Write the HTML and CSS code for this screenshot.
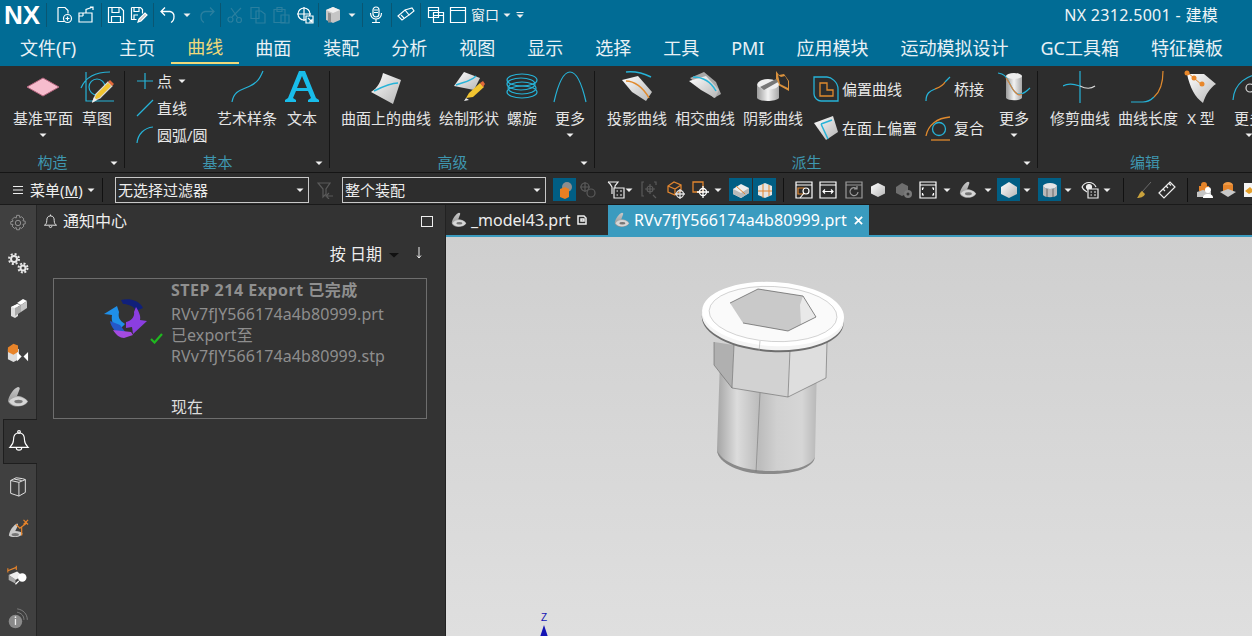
FILE: index.html
```html
<!DOCTYPE html>
<html lang="zh">
<head>
<meta charset="utf-8">
<title>NX 2312.5001 - 建模</title>
<link rel="stylesheet" href="styles.css">
</head>
<body>
<svg class="defs" width="0" height="0" aria-hidden="true">
  <defs>
    <linearGradient id="gs" x1="0" y1="0" x2="1" y2="1"><stop offset="0" stop-color="#fff"/><stop offset="1" stop-color="#b5b5b5"/></linearGradient>
    <linearGradient id="gp" x1="0" y1="0" x2="0" y2="1"><stop offset="0" stop-color="#c9c9c9"/><stop offset="1" stop-color="#8c8c8c"/></linearGradient>
    <linearGradient id="gc" x1="0" y1="0" x2="1" y2="0"><stop offset="0" stop-color="#9a9a9a"/><stop offset=".5" stop-color="#f2f2f2"/><stop offset="1" stop-color="#a8a8a8"/></linearGradient>
    <linearGradient id="mb" x1="0" y1="0" x2="1" y2="0"><stop offset="0" stop-color="#a5a5a5"/><stop offset=".2" stop-color="#dcdcdc"/><stop offset=".42" stop-color="#bcbcbc"/><stop offset=".6" stop-color="#d0d0d0"/><stop offset=".85" stop-color="#d6d6d6"/><stop offset="1" stop-color="#b8b8b8"/></linearGradient>
    <symbol id="caret" viewBox="0 0 8 8"><path d="M0.5 2.5h7L4 6z" fill="#f0f0f0"/></symbol>
    <symbol id="shaded" viewBox="0 0 18 18"><path d="M9 2l7 3.5v7L9 16l-7-3.5v-7z" fill="url(#gs)"/></symbol>
    <symbol id="part" viewBox="0 0 22 22"><path d="M1 15C2 9 7 2 11 1c1.500 0 2 1 1.500 2.500L10 10c4 0 9 2 11 5.500-2 4-7 5-11 5s-8-2-9-5.500z" fill="url(#gp)"/><path d="M2 15.500c2-3 5-4.500 9-4.500s7 1.500 9.500 4.500c-2 3-6 4.500-9.500 4.500s-7-1.500-9-4.500z" fill="#d6d6d6"/><ellipse cx="11.500" cy="15.500" rx="4.200" ry="1.800" fill="#767676"/></symbol>
  </defs>
</svg>

<header class="topbar">
  <div class="quick">
    <span class="logo">NX</span>
    <i class="sep m5"></i>
    <svg class="ic m8" viewBox="0 0 18 18" fill="none" stroke="#fff" stroke-width="1.2"><path d="M3 1.5h7l3 3v3M3 1.500v14h6"/><circle cx="12.500" cy="12.500" r="4"/><path d="M10.500 12.500h4M12.500 10.500v4"/></svg>
    <svg class="ic m4" viewBox="0 0 18 18" fill="none" stroke="#fff" stroke-width="1.2"><path d="M2 7h13v9H2zM2 10h4M6 7v3M9 7V3.500L16 1M13 1h3v3"/></svg>
    <i class="sep m6"></i>
    <svg class="ic m5" viewBox="0 0 18 18" fill="none" stroke="#fff" stroke-width="1.2"><path d="M1.500 1.500h12l3 3v12h-15zM5 1.500v5h7v-5M4.500 16.500v-6h9v6"/></svg>
    <svg class="ic m5" viewBox="0 0 18 18" fill="none" stroke="#fff" stroke-width="1.2"><path d="M1.500 1.500h9l2 2v4M1.500 1.500v12h5M4 1.500v4h5v-4M4 13v-4h4"/><path d="M8 16l1-3 6-6 2 2-6 6z" fill="#c8c8c8"/></svg>
    <i class="sep m5"></i>
    <svg class="ic m5" viewBox="0 0 18 18" fill="none" stroke="#fff" stroke-width="1.300"><path d="M6 1.500L2 5.500l4 4M2 5.500h9a5 5 0 0 1 4 5c0 3-1 5-3 6"/></svg>
    <svg class="car m6"><use href="#caret"/></svg>
    <svg class="ic m7" viewBox="0 0 18 18" fill="none" stroke="#2a7f9f" stroke-width="1.300"><path d="M12 1.500l4 4-4 4M16 5.500H7a5 5 0 0 0-4 5c0 3 1 5 3 6"/></svg>
    <i class="sep m4"></i>
    <svg class="ic m5" viewBox="0 0 18 18" fill="none" stroke="#2a7f9f" stroke-width="1.200"><circle cx="4.500" cy="13.500" r="2.500"/><circle cx="13" cy="14" r="2.500"/><path d="M6 11L15 2M12 12L5 2"/></svg>
    <svg class="ic m5" viewBox="0 0 18 18" fill="none" stroke="#2a7f9f" stroke-width="1.200"><path d="M2 1.500h8v11H2zM7 5h5l4 3v9H7z"/></svg>
    <svg class="ic m5" viewBox="0 0 18 18" fill="none" stroke="#2a7f9f" stroke-width="1.200"><path d="M2 3.500h11v13H2zM5 1.500h5v4H5zM9 9h8v8H9z"/></svg>
    <svg class="ic m6" viewBox="0 0 18 18" fill="none" stroke="#fff" stroke-width="1.200"><circle cx="8" cy="8" r="6"/><path d="M8 1v14M1 8h14"/><path d="M10 10h7v7h-7z" fill="#016c95"/><path d="M12 12l4 4M16 13v3h-3"/></svg>
    <i class="sep m4"></i>
    <svg class="ic m5" viewBox="0 0 18 18"><path d="M2 4l7-3 7 3v10l-7 3-7-3z" fill="#c5c5c5"/><path d="M2 4l7 3 7-3-7-3z" fill="#efefef"/><path d="M7 7.500v9H4v-10z" fill="#8f8f8f"/></svg>
    <svg class="car m6"><use href="#caret"/></svg>
    <i class="sep m6"></i>
    <svg class="ic m4" viewBox="0 0 18 18" fill="none" stroke="#fff" stroke-width="1.200"><rect x="6" y="1" width="6" height="10" rx="3"/><path d="M3.500 7c0 8 11 8 11 0M9 13v3M5 16.500h8M7 4h4M7 6.500h4"/></svg>
    <i class="sep m6"></i>
    <svg class="ic m5" viewBox="0 0 18 18" fill="none" stroke="#fff" stroke-width="1.100"><path d="M1 10l7-6 4 5-7 5z"/><path d="M8 4l7-2 2 3-5 4"/><path d="M4 9l3 3" /></svg>
    <i class="sep m5"></i>
    <svg class="ic m6" viewBox="0 0 18 18" fill="none" stroke="#fff" stroke-width="1.200"><path d="M1.500 1.500h10v10h-10zM1.500 4.500h10M6.500 6.500h10v10h-10zM6.500 9.500h10"/></svg>
    <svg class="ic m4" viewBox="0 0 18 18" fill="none" stroke="#fff" stroke-width="1.200"><path d="M1.500 1.500h15v15h-15zM1.500 4.500h15"/></svg>
    <span class="winlabel m4">窗口</span>
    <svg class="car m4"><use href="#caret"/></svg>
    <svg class="car m5" viewBox="0 0 8 8"><path d="M0.500 1.500h7" stroke="#f0f0f0"/><path d="M0.500 3.500h7L4 7z" fill="#f0f0f0"/></svg>
    <span class="apptitle">NX 2312.5001 - 建模</span>
  </div>
  <nav class="tabs">
    <span class="tab file">文件(F)</span>
    <span class="tab">主页</span>
    <span class="tab active">曲线</span>
    <span class="tab">曲面</span>
    <span class="tab">装配</span>
    <span class="tab">分析</span>
    <span class="tab">视图</span>
    <span class="tab">显示</span>
    <span class="tab">选择</span>
    <span class="tab">工具</span>
    <span class="tab">PMI</span>
    <span class="tab">应用模块</span>
    <span class="tab">运动模拟设计</span>
    <span class="tab">GC工具箱</span>
    <span class="tab">特征模板</span>
  </nav>
</header>

<section class="ribbon">
  <div class="group g1">
    <div class="items">
      <div class="big">
        <svg class="lg" viewBox="0 0 34 34"><path d="M1 17L17 8l16 9-16 9z" fill="#f6bccd" stroke="#b5667f"/></svg>
        <span>基准平面</span>
        <svg class="car"><use href="#caret"/></svg>
      </div>
      <div class="big">
        <svg class="lg" viewBox="0 0 34 34" fill="none" stroke="#26b3d8" stroke-width="1.200"><path d="M1 18C6 6 16 2 30 2M6 2v29h28"/><circle cx="17" cy="17" r="8"/><path d="M13 31l3-7 12-12 4 4-12 12z" fill="#f2c530" stroke="#d8d8d8"/><path d="M28 12l4 4 2-2-4-4z" fill="#e0683a" stroke="none"/><path d="M12 33l2-6 3 3z" fill="#eee" stroke="none"/></svg>
        <span>草图</span>
      </div>
    </div>
    <div class="glabel">构造<svg class="car gcar"><use href="#caret"/></svg></div>
  </div>

  <div class="group g2">
    <div class="items">
      <div class="stack">
        <div class="small"><svg class="sm" viewBox="0 0 18 18" fill="none" stroke="#26b3d8" stroke-width="1.200"><path d="M9 1v16M1 9h16"/></svg><span>点</span><svg class="car m6"><use href="#caret"/></svg></div>
        <div class="small"><svg class="sm" viewBox="0 0 18 18" fill="none" stroke="#26b3d8" stroke-width="1.200"><path d="M1 17L17 1"/></svg><span>直线</span></div>
        <div class="small"><svg class="sm" viewBox="0 0 18 18" fill="none" stroke="#26b3d8" stroke-width="1.200"><path d="M1 17C2 8 8 2 17 1"/></svg><span>圆弧/圆</span></div>
      </div>
      <div class="big">
        <svg class="lg" viewBox="0 0 34 34" fill="none" stroke="#26b3d8" stroke-width="1.200"><path d="M2 32C4 20 12 20 20 16S30 8 33 1"/></svg>
        <span>艺术样条</span>
      </div>
      <div class="big">
        <svg class="lg" viewBox="0 0 34 34" fill="#19bdea"><path d="M14 1h6l11 27 3 2v2H23v-2l3-2-3-7H11l-3 7 3 2v2H0v-2l3-2zM12 18h10L17 6z"/></svg>
        <span>文本</span>
      </div>
    </div>
    <div class="glabel">基本<svg class="car gcar"><use href="#caret"/></svg></div>
  </div>

  <div class="group g3">
    <div class="items">
      <div class="big">
        <svg class="lg" viewBox="0 0 34 34"><path d="M14 3l18 7-8 24L2 22c7-4 10-11 12-19z" fill="url(#gs)"/><path d="M5 21c8-4 16-8 24-8" fill="none" stroke="#26b3d8" stroke-width="1.500"/></svg>
        <span>曲面上的曲线</span>
      </div>
      <div class="big">
        <svg class="lg" viewBox="0 0 34 34"><path d="M12 2l16 6-6 12L2 16z" fill="url(#gs)"/><path d="M4 15c7-3 14-3 20-9" fill="none" stroke="#26b3d8" stroke-width="1.500"/><path d="M14 28l3-5 11-10 4 4-11 10z" fill="#f2c530"/><path d="M28 13l3-2 2 3-2 3z" fill="#e0683a"/><path d="M12 31l2-3 3 2z" fill="#eee"/></svg>
        <span>绘制形状</span>
      </div>
      <div class="big">
        <svg class="lg" viewBox="0 0 34 34" fill="none" stroke="#26b3d8" stroke-width="1.200"><ellipse cx="17" cy="10" rx="15" ry="6"/><ellipse cx="16" cy="14" rx="14" ry="6"/><ellipse cx="17" cy="18" rx="14" ry="6"/><ellipse cx="17" cy="22" rx="15" ry="6"/></svg>
        <span>螺旋</span>
      </div>
      <div class="big more">
        <svg class="lg" viewBox="0 0 34 34" fill="none" stroke="#26b3d8" stroke-width="1.200"><path d="M1 32C6 10 12 2 17 2s11 8 16 30"/></svg>
        <span>更多</span>
        <svg class="car"><use href="#caret"/></svg>
      </div>
    </div>
    <div class="glabel">高级<svg class="car gcar"><use href="#caret"/></svg></div>
  </div>

  <div class="group g4">
    <div class="items">
      <div class="big">
        <svg class="lg" viewBox="0 0 34 34"><path d="M2 10L18 6l14 16-6 9L12 22z" fill="url(#gs)"/><path d="M6 11c8 0 17 6 23 17" fill="none" stroke="#e08a2e" stroke-width="1.500"/><path d="M6 2c10-1 17 1 25 5" fill="none" stroke="#26b3d8" stroke-width="1.500"/></svg>
        <span>投影曲线</span>
      </div>
      <div class="big">
        <svg class="lg" viewBox="0 0 34 34"><path d="M2 8L16 2l12 10 5 12-7 4z" fill="#a8a8a8"/><path d="M1 11L18 6l13 14-4 8-14-8z" fill="url(#gs)"/><path d="M5 7c10 0 18 5 23 14" fill="none" stroke="#26b3d8" stroke-width="1.500"/></svg>
        <span>相交曲线</span>
      </div>
      <div class="big">
        <svg class="lg" viewBox="0 0 34 34"><path d="M20 1l3 4 5-1 5 7v10L22 15l-2-6z" fill="#d9913d"/><path d="M22 5l3 2 4-1 3 5v7l-8-4z" fill="#2d2d2d"/><ellipse cx="12" cy="15" rx="11" ry="6" fill="#eee"/><path d="M1 15v13c2 4 19 4 22 0V15c-2 6-19 6-22 0z" fill="url(#gc)"/><path d="M4 17L20 9l2 3L8 20z" fill="#777"/></svg>
        <span>阴影曲线</span>
      </div>
      <div class="stack tall">
        <div class="small wide"><svg class="md" viewBox="0 0 26 26" fill="none"><path d="M1 1h13c4 0 11 5 11 12v12H8c-3 0-7-3-7-7z" stroke="#26b3d8" stroke-width="1.300"/><path d="M7 7h7v7h6v6H7z" stroke="#e08a2e" stroke-width="1.300"/></svg><span>偏置曲线</span></div>
        <div class="small wide"><svg class="md" viewBox="0 0 26 26"><path d="M1 8L20 1l5 16-12 8z" fill="url(#gs)"/><path d="M8 9l11-4M8 9l7 15" fill="none" stroke="#26b3d8" stroke-width="1.500"/></svg><span>在面上偏置</span></div>
      </div>
      <div class="stack tall c2">
        <div class="small wide"><svg class="md" viewBox="0 0 26 26" fill="none" stroke-width="1.300"><path d="M1 25c0-8 4-10 9-12" stroke="#26b3d8"/><path d="M10 13c5-2 8-3 10-7" stroke="#e08a2e"/><path d="M20 6c2-2 3-3 5-5" stroke="#26b3d8"/></svg><span>桥接</span></div>
        <div class="small wide"><svg class="md" viewBox="0 0 26 26" fill="none" stroke-width="1.300"><path d="M1 21C3 10 12 3 25 2" stroke="#e08a2e"/><path d="M6 25h19" stroke="#e08a2e"/><circle cx="14" cy="14" r="6.500" stroke="#26b3d8"/></svg><span>复合</span></div>
      </div>
      <div class="big more">
        <svg class="lg" viewBox="0 0 34 34"><path d="M9 6h16v22c-2 3-14 3-16 0z" fill="url(#gc)"/><ellipse cx="17" cy="6" rx="8" ry="3" fill="#eee"/><path d="M1 3c6 1 8 3 11 9s6 13 11 12c4 0 7-3 10-6" fill="none" stroke="#26b3d8" stroke-width="1.200"/><path d="M9 8c3 3 5 10 9 14s5 3 7 2" fill="none" stroke="#d9803a" stroke-width="1.200"/></svg>
        <span>更多</span>
        <svg class="car"><use href="#caret"/></svg>
      </div>
    </div>
    <div class="glabel">派生<svg class="car gcar"><use href="#caret"/></svg></div>
  </div>

  <div class="group g5">
    <div class="items">
      <div class="big">
        <svg class="lg" viewBox="0 0 34 34" fill="none" stroke-width="1.200"><path d="M17 1v32" stroke="#26b3d8"/><path d="M0 16c5-3 10-2 17 0" stroke="#26b3d8"/><path d="M17 16c6 3 11 3 15 0" stroke="#d8d8d8"/></svg>
        <span>修剪曲线</span>
      </div>
      <div class="big">
        <svg class="lg" viewBox="0 0 34 34" fill="none" stroke-width="1.200"><path d="M0 32h12c4 0 8-2 11-5" stroke="#26b3d8"/><path d="M23 27c6-5 9-14 9-26" stroke="#e08a2e"/></svg>
        <span>曲线长度</span>
      </div>
      <div class="big">
        <svg class="lg" viewBox="0 0 34 34"><path d="M3 4h17l12 10c-6 4-10 10-13 19C11 27 6 18 3 4z" fill="url(#gs)"/><path d="M3 2l15 13" stroke="#e08a2e"/><circle cx="3" cy="3" r="2.500" fill="#e8872a"/><circle cx="10" cy="8" r="2.500" fill="#e8872a"/><circle cx="18" cy="14" r="2.500" fill="#e8872a"/></svg>
        <span>X 型</span>
      </div>
      <div class="big more">
        <svg class="lg" viewBox="0 0 34 34" fill="none" stroke-width="1.200"><path d="M1 30C2 14 14 4 34 3" stroke="#26b3d8"/><circle cx="18" cy="18" r="4" stroke="#d8d8d8"/></svg>
        <span>更多</span>
        <svg class="car"><use href="#caret"/></svg>
      </div>
    </div>
    <div class="glabel plain">编辑</div>
  </div>
</section>

<section class="toolbar">
  <svg class="menuicon" viewBox="0 0 12 10" fill="none" stroke="#eee"><path d="M1 1.500h10M1 5h10M1 8.500h10"/></svg>
  <span class="menu m6">菜单(<u>M</u>)</span>
  <svg class="car m3"><use href="#caret"/></svg>
  <i class="sep dark m7"></i>
  <div class="select s1 m12"><span>无选择过滤器</span><svg class="car"><use href="#caret"/></svg></div>
  <svg class="ic m8" viewBox="0 0 18 18" fill="none" stroke="#5a5a5a" stroke-width="1.200"><path d="M1 2h12L9 8v5l-3 3V8zM10 15h6M12 12l-3 3 3 3"/></svg>
  <div class="select s2 m7"><span>整个装配</span><svg class="car"><use href="#caret"/></svg></div>
  <span class="hl m7"><svg class="ic" viewBox="0 0 18 18"><circle cx="11" cy="6" r="5" fill="#8d8d8d"/><path d="M4 8l5-2 4 2v8l-4 2-5-2z" fill="#e87f22"/></svg></span>
  <svg class="ic m3" viewBox="0 0 18 18" fill="none" stroke="#5a5a5a" stroke-width="1.200"><circle cx="6" cy="6" r="4"/><circle cx="12" cy="12" r="4"/><path d="M6 1v10M1 6h10"/></svg>
  <svg class="ic m10" viewBox="0 0 18 18" fill="none" stroke="#eee" stroke-width="1.200"><path d="M1 1h10L8 5v4"/><path d="M1 1c2 1 3 3 4 5v7"/><path d="M7 7h10v10H7z" fill="#2c2c2c"/><path d="M9.500 10h1.500M9.500 14h1.500M13 10h2M13 14h2"/></svg>
  <svg class="car m0"><use href="#caret"/></svg>
  <svg class="ic m8" viewBox="0 0 18 18" fill="none" stroke="#5a5a5a" stroke-width="1.200"><path d="M3 1H1v14h2M13 1h2v3M6 8a3 3 0 1 0 6 0a3 3 0 1 0-6 0M9 3v10M4 8h10M12 14l3 3"/></svg>
  <svg class="ic m8" viewBox="0 0 18 18" fill="none" stroke="#e0852f" stroke-width="1.300"><path d="M1 5l6-4 7 3v6l-6 4-7-3zM1 5l7 3 6-4M8 8v6"/><circle cx="13" cy="13" r="3.500" stroke="#ddd"/><path d="M13 8v10M8 13h10" stroke="#ddd"/></svg>
  <svg class="ic m7" viewBox="0 0 18 18" fill="none" stroke-width="1.300"><path d="M1 1h10v10H1z" stroke="#e0852f"/><circle cx="11" cy="11" r="3.500" stroke="#fff"/><path d="M11 5v12M5 11h12" stroke="#fff"/></svg>
  <svg class="car m4"><use href="#caret"/></svg>
  <span class="hl m7"><svg class="ic" viewBox="0 0 18 18"><path d="M1 8l8-5 8 4v5l-8 5-8-4z" fill="#eee"/><path d="M1 8l8 4 8-5v5l-8 5-8-4z" fill="#b9b9b9"/><path d="M4 5l9 8" stroke="#e0852f"/></svg></span>
  <span class="hl m1"><svg class="ic" viewBox="0 0 18 18"><path d="M2 5l7-3 7 3v9l-7 3-7-3z" fill="#e3e3e3"/><path d="M7 3v14M13 4v11M2 10h14" stroke="#e0852f" fill="none"/></svg></span>
  <i class="sep dark m7"></i>
  <svg class="ic m11" viewBox="0 0 18 18" fill="none" stroke="#fff" stroke-width="1.200"><path d="M1 1h16v16H1zM1 4h16"/><path d="M3 7h6v6H3z" stroke="#e0852f"/><circle cx="11" cy="10" r="3" fill="#2c2c2c"/><path d="M9 12l-4 5"/></svg>
  <svg class="ic m6" viewBox="0 0 18 18" fill="none" stroke="#fff" stroke-width="1.200"><path d="M1 1h16v16H1zM1 4h16M4 10.500h10M6 8.500l-2 2 2 2M12 8.500l2 2-2 2"/></svg>
  <svg class="ic m8" viewBox="0 0 18 18" fill="none" stroke="#9a9a9a" stroke-width="1.200"><path d="M1 1h16v16H1zM1 4h16"/><path d="M13 11a4 4 0 1 1-1-3M12 5v3h-3"/></svg>
  <svg class="ic m6"><use href="#shaded"/></svg>
  <svg class="ic m8" viewBox="0 0 18 18"><path d="M1 6l6-4 6 3v7l-6 3-6-3z" fill="#6e6e6e"/><circle cx="13" cy="13" r="4" fill="#7a7a7a"/><circle cx="13" cy="13" r="1.500" fill="#333"/></svg>
  <svg class="ic m6" viewBox="0 0 18 18" fill="none" stroke="#fff" stroke-width="1.200"><path d="M1 1h16v16H1zM1 4h16M5 7H3.500v2M13 7h1.500v2M5 14H3.500v-2M13 14h1.500v-2"/></svg>
  <svg class="car m6"><use href="#caret"/></svg>
  <svg class="ic m8"><use href="#part"/></svg>
  <svg class="car m7"><use href="#caret"/></svg>
  <span class="hl m5"><svg class="ic" viewBox="0 0 18 18"><path d="M9 1l8 5v7l-8 4-8-4V6z" fill="url(#gs)"/></svg></span>
  <svg class="car m3"><use href="#caret"/></svg>
  <span class="hl m7"><svg class="ic" viewBox="0 0 18 18"><ellipse cx="9" cy="5" rx="7" ry="3" fill="#e5e5e5"/><path d="M2 5v9c2 3 12 3 14 0V5c-2 4-12 4-14 0z" fill="#b8b8b8"/><path d="M6 8v8M12 8v8" stroke="#666"/></svg></span>
  <svg class="car m3"><use href="#caret"/></svg>
  <svg class="ic m9" viewBox="0 0 18 18" fill="none" stroke="#eee" stroke-width="1.200"><path d="M1 6c3-6 11-6 14 0"/><path d="M1 6c1 3 3 4 5 5"/><circle cx="8" cy="6" r="2.500" fill="#eee"/><path d="M7 8h10v9H7z" fill="#2c2c2c"/><path d="M9.500 11h1.500M9.500 14h1.500M13 11h2M13 14h2"/></svg>
  <svg class="car m4"><use href="#caret"/></svg>
  <i class="sep dark m12"></i>
  <svg class="ic m10" viewBox="0 0 18 18"><path d="M17 1L8 11" stroke="#6a6a6a" fill="none"/><path d="M8 10l3 3c-1 3-5 4-8 4 2-2 2-5 5-7z" fill="#c9a23c"/></svg>
  <svg class="ic m6" viewBox="0 0 18 18" fill="none" stroke="#eee" stroke-width="1.200"><path d="M1 12L12 1l5 5L6 17zM5 8l2 2M8 5l2 2M11 2.500l2 2"/></svg>
  <i class="sep dark m11"></i>
  <svg class="ic m8" viewBox="0 0 18 18"><circle cx="8" cy="4" r="3" fill="#e5842a"/><path d="M3 5h10v5H3z" fill="#e5842a"/><path d="M1 11l6-2 8 2v5H1z" fill="#c5c5c5"/><circle cx="12" cy="9" r="3" fill="#fff"/><path d="M7 17c0-3 2-4 5-4s5 1 5 4z" fill="#fff"/></svg>
  <svg class="ic m5" viewBox="0 0 18 18"><ellipse cx="9" cy="4" rx="5" ry="3" fill="#ef9a45"/><path d="M4 4v7c1 2 9 2 10 0V4z" fill="#e5842a"/><path d="M1 11l8-3 8 3-8 5z" fill="#c9c9c9"/></svg>
  <svg class="ic m6" viewBox="0 0 18 18"><path d="M1 2h16v14H1z" fill="#f5f5f5"/><path d="M2 10l5-4 4 4-5 3z" fill="#e5a02a"/></svg>
</section>

<main class="work">
  <aside class="side">
    <div class="sitem first"><svg class="si dim" viewBox="0 0 20 20" fill="none" stroke="#9a9a9a"><circle cx="10" cy="10" r="3"/><path d="M8.500 1.500h3l.5 2.500 2-1 2.500 2.500-1 2 2.500.5v3l-2.500.5 1 2L14 16l-2-1-.5 2.500h-3L8 15l-2 1-2.500-2.500 1-2L2 11.500v-3l2.500-.5-1-2L6 3.500l2 1z"/></svg></div>
    <div class="sitem"><svg class="si" viewBox="0 0 22 22" fill="none" stroke="#e8e8e8"><circle cx="7" cy="7" r="3" stroke-width="2"/><circle cx="7" cy="7" r="5" stroke-width="2" stroke-dasharray="2 1.930"/><circle cx="16" cy="16" r="2.500" stroke-width="2"/><circle cx="16" cy="16" r="4.500" stroke-width="2" stroke-dasharray="2 1.530"/></svg></div>
    <div class="sitem"><svg class="si" viewBox="0 0 22 22"><path d="M4 10l7-3v12l-3 2-4-2z" fill="#ddd"/><path d="M4 10l6-3 4 1-6 3z" fill="#fff"/><path d="M10 6l6-4 4 2-6 4z" fill="#fff"/><path d="M14 8l6-4v7l-6 4z" fill="#c4c4c4"/><path d="M8 11l6-3v7l-6 4z" fill="#aaa"/></svg></div>
    <div class="sitem"><svg class="si" viewBox="0 0 24 22"><path d="M1 8l6-3 6 3v11l-6 3-6-3z" fill="#ddd"/><path d="M1 6l6-4 5 2v7l-5 3-6-3z" fill="#e8842a"/><path d="M11 11l5 5-5 5z" fill="#fff"/><path d="M23 11l-5 5 5 5z" fill="#fff"/></svg></div>
    <div class="sitem"><svg class="si"><use href="#part"/></svg></div>
    <div class="sitem active"><svg class="si" viewBox="0 0 22 24" fill="none" stroke="#fff" stroke-width="1.200"><path d="M11 3c-5 0-6 4-6 8 0 4-2 6-4 8h20c-2-2-4-4-4-8 0-4-1-8-6-8z"/><circle cx="11" cy="2.200" r="1.500"/><path d="M8 19c0 4 6 4 6 0"/></svg></div>
    <div class="sitem"><svg class="si" viewBox="0 0 20 24" fill="none" stroke="#eee" stroke-width="1"><path d="M2 6l9 2 7-3v14l-7 4-9-3zM11 8v15M2 6l6-3 7 1 3 1M6 4.500l8 1.500"/></svg></div>
    <div class="sitem"><svg class="si" viewBox="0 0 24 24"><path d="M2 18C3 12 7 7 11 5c1 0 1 1 1 2l-3 6c4 0 7 1 8 3-2 4-12 5-15 2z" fill="#c9c9c9"/><ellipse cx="9" cy="17" rx="4" ry="1.800" fill="#767676"/><path d="M10 6l4 4 8-6M18 1l5 5M23 1l-5 5M16 8v10" stroke="#e8842a" fill="none" stroke-width="1.300"/></svg></div>
    <div class="sitem"><svg class="si" viewBox="0 0 26 24"><path d="M2 12l10-4 6 5-8 5z" fill="#eee"/><path d="M2 12v6l8 4v-5z" fill="#aaa"/><circle cx="18" cy="15" r="5" fill="#fff"/><path d="M14 19l-4 4" stroke="#fff" stroke-width="1.500"/><path d="M1 7l10-4M1 4v5M11 1v5" stroke="#e8842a" fill="none" stroke-width="1.300"/></svg></div>
    <div class="sitem"><svg class="si" viewBox="0 0 24 26" fill="none"><circle cx="9" cy="16" r="8" fill="#8a8a8a"/><path d="M9 13v7" stroke="#eee" stroke-width="1.500"/><circle cx="9" cy="10.800" r="1" fill="#eee"/><path d="M11 5c5 1 8 4 8 9M11 1c7 1 12 6 12 13" stroke="#8a8a8a"/></svg></div>
  </aside>

  <section class="panel">
    <div class="phead">
      <svg class="bell" viewBox="0 0 14 16" fill="none" stroke="#eee"><path d="M7 2c-3 0-4 2-4 5s-1 4-2.500 5h13C12 11 11 10 11 7S10 2 7 2zM5.500 13c0 2 3 2 3 0M7 2V.5"/></svg>
      <span>通知中心</span>
      <span class="maxbox"></span>
    </div>
    <div class="psort">
      <span>按 日期</span>
      <svg class="sortcar" viewBox="0 0 10 6"><path d="M0 1h10L5 5.500z" fill="#111"/></svg>
      <svg class="sortarrow" viewBox="0 0 6 12" fill="none" stroke="#eee"><path d="M3 0v11M1 8.500L3 11l2-2.500"/></svg>
    </div>
    <article class="card">
      <div class="cardicon">
        <svg class="cubelogo" viewBox="0 0 46 40">
          <path d="M1 15L14 7l2 6c-1 5 0 8 6 12l-6 6C10 27 8 22 9 16z" fill="#1f8fe8"/>
          <path d="M7 22c1 6 5 11 12 14l4-2-6-8z" fill="#2457c8"/>
          <path d="M18 1c8-2 18 0 22 8l-7 3c-2-5-8-7-13-7z" fill="#10207a"/>
          <path d="M33 8c3 5 5 9 4 13l7 1-14 13-1-7-6 1 0-6c5-1 9-5 8-10z" fill="#8b3ee0"/>
          <path d="M10 31l18 2 2 3-9 3c-4 0-8-3-11-8z" fill="#a44be0"/>
        </svg>
        <svg class="check" viewBox="0 0 13 11" fill="none" stroke="#1fb81f" stroke-width="2.200"><path d="M1 6l3.500 3.500L12 1"/></svg>
      </div>
      <div class="cardtext">
        <strong>STEP 214 Export 已完成</strong>
        <p>RVv7fJY566174a4b80999.prt</p>
        <p>已export至</p>
        <p>RVv7fJY566174a4b80999.stp</p>
        <time>现在</time>
      </div>
    </article>
  </section>

  <section class="graphics">
    <div class="gtabs">
      <div class="gtab"><svg class="ti"><use href="#part"/></svg><span>_model43.prt</span><svg class="save" viewBox="0 0 10 10" fill="none" stroke="#eee" stroke-width="1.500"><path d="M1 1h6l2 2v6H1zM4 4h3v2H4z"/></svg></div>
      <div class="gtab on"><svg class="ti"><use href="#part"/></svg><span>RVv7fJY566174a4b80999.prt</span><svg class="close" viewBox="0 0 10 10" stroke="#fff" stroke-width="2"><path d="M1 1l8 8M9 1l-8 8"/></svg></div>
    </div>
    <div class="view">
      <svg class="model" viewBox="0 0 220 230">
        <path d="M60 100L57 190C58 205 85 215 110 214C135 214 153 208 155 197L157 100z" fill="url(#mb)"/>
        <path d="M57 190C58 205 85 215 110 214C135 214 153 208 155 197C150 208 130 211 110 211C85 211 62 203 57 190z" fill="#8a8a8a"/>
        <path d="M100 133L96 212" stroke="#777" stroke-width=".6" fill="none"/>
        <path d="M54 82L54 105L72 128L74 85z" fill="#b0b0b0"/>
        <path d="M74 85L72 128L128 137L130 90z" fill="#d2d2d2"/>
        <path d="M130 90L128 137L166 118L167 82z" fill="#dedede"/>
        <path d="M54 82L54 105L72 128L128 137L166 118L167 82M74 85L72 128M130 90L128 137" fill="none" stroke="#666" stroke-width=".6"/>
        <g transform="rotate(3 113 55)">
          <ellipse cx="113" cy="60" rx="71" ry="32" fill="#6e6e6e"/>
          <ellipse cx="113" cy="58" rx="71" ry="32" fill="#f4f4f4"/>
          <ellipse cx="113" cy="54" rx="71" ry="32" fill="#ffffff"/>
          <ellipse cx="113" cy="54" rx="64" ry="27.500" fill="#fafafa" stroke="#a8a8a8" stroke-width=".5"/>
        </g>
        <path d="M100 81L99 91" stroke="#aaa" stroke-width=".6"/>
        <path d="M98 29L143 36L156 57L128 71L83 63L70 43z" fill="#c9c9c9"/>
        <path d="M143 36L156 57L141 64L140 45z" fill="#e9e9e9"/>
        <path d="M70 43L98 29L143 36L156 57M83 63L128 71L156 57" fill="none" stroke="#444" stroke-width=".6"/>
      </svg>
      <div class="triad">
        <span>Z</span>
        <svg class="cone" viewBox="0 0 8 12"><path d="M4 0L8 12H0z" fill="#1414b4"/></svg>
      </div>
    </div>
  </section>
</main>
</body>
</html>
```
FILE: styles.css
```css
* { box-sizing: border-box; }
html, body { margin: 0; padding: 0; height: 100%; overflow: hidden; }
body {
  width: 1252px;
  height: 636px;
  display: flex;
  flex-direction: column;
  font-family: "Noto Sans", "Noto Sans CJK SC", sans-serif;
  color: #e8e8e8;
  background: #2d2d2d;
}
.defs { position: absolute; }
i { display: block; font-style: normal; }

.m0 { margin-left: 0; } .m1 { margin-left: 1px; } .m2 { margin-left: 2px; } .m3 { margin-left: 3px; }
.m4 { margin-left: 4px; } .m5 { margin-left: 5px; } .m6 { margin-left: 6px; } .m7 { margin-left: 7px; }
.m8 { margin-left: 8px; } .m9 { margin-left: 9px; } .m10 { margin-left: 10px; } .m11 { margin-left: 11px; }
.m12 { margin-left: 12px; }

.ic { width: 18px; height: 18px; flex: none; display: block; }
.car { width: 8px; height: 8px; flex: none; display: block; }
.sep { width: 1px; height: 24px; flex: none; background: #0a5672; }
.sep.dark { background: #111; height: 24px; }

.topbar { height: 66px; flex: none; background: #016c95; }
.quick { height: 33px; display: flex; align-items: center; padding: 0 0 3px 4px; }
.logo { width: 37px; flex: none; font: 700 26px/30px "Liberation Sans", sans-serif; color: #fff; }
.winlabel { font-size: 14px; line-height: 20px; color: #f4f4f4; width: 28px; flex: none; }
.apptitle { margin-left: auto; margin-right: 34px; font-size: 16px; letter-spacing: 0.3px; color: #eef4f7; line-height: 20px; }
.tabs { height: 33px; display: flex; padding-left: 4px; }
.tab {
  padding: 0 16px;
  font-size: 18px;
  line-height: 31px;
  color: #e9f1f5;
  white-space: nowrap;
}
.tab.file { margin-right: 11px; }
.tab.active { color: #f0d97a; border-bottom: 2px solid #f0d97a; height: 31px; line-height: 29px; }

.ribbon { height: 107px; flex: none; display: flex; background: #2d2d2d; border-bottom: 1px solid #151515; }
.group { flex: none; display: flex; flex-direction: column; position: relative; padding-top: 4px; }
.group::after { content: ""; position: absolute; right: 0; top: 5px; bottom: 4px; width: 1px; background: #151515; }
.g1 { width: 125px; } .g2 { width: 205px; } .g3 { width: 265px; } .g4 { width: 443px; } .g5 { width: 214px; }
.g5::after { display: none; }
.items { height: 85px; display: flex; padding-left: 12px; column-gap: 8px; }
.g1 .items { padding-left: 13px; column-gap: 9px; }
.g2 .items { column-gap: 10px; padding-left: 11px; }
.g3 .items { padding-left: 11px; }
.glabel {
  flex: 1;
  display: flex;
  justify-content: center;
  align-items: center;
  padding: 0 20px 1px 0;
  font-size: 15px;
  color: #3f97b0;
  line-height: 18px;
}
.glabel.plain { padding-right: 0; }
.gcar { position: absolute; right: 7px; bottom: 5px; }
.big { display: flex; flex-direction: column; align-items: center; font-size: 15px; line-height: 16px; color: #e4e4e4; white-space: nowrap; }
.lg { width: 34px; height: 34px; margin: 0 -2px 6px; display: block; }
.big .car { margin-top: 5px; }
.big.more { margin-left: 10px; }
.stack { width: 71px; display: flex; flex-direction: column; row-gap: 7px; padding-top: 1px; font-size: 15px; }
.small { display: flex; align-items: center; height: 20px; line-height: 20px; white-space: nowrap; color: #e8e8e8; }
.sm { width: 18px; height: 18px; margin-right: 3px; flex: none; }
.stack.tall { width: 104px; row-gap: 13px; padding-top: 6px; margin-left: 2px; }
.stack.c2 { width: 56px; margin-left: 0; }
.small.wide { height: 26px; }
.md { width: 26px; height: 26px; margin-right: 3px; flex: none; }

.toolbar { height: 32px; flex: none; display: flex; align-items: center; padding: 2px 0 0 12px; background: #2d2d2d; border-bottom: 1px solid #1a1a1a; }
.menuicon { width: 12px; height: 10px; flex: none; }
.menu { width: 54px; flex: none; font-size: 15px; line-height: 20px; color: #eee; white-space: nowrap; }
.select {
  height: 26px;
  flex: none;
  display: flex;
  align-items: center;
  justify-content: space-between;
  padding: 0 4px 0 2px;
  border: 1px solid #c8c8c8;
  font-size: 15px;
  color: #eee;
  line-height: 22px;
}
.s1 { width: 194px; } .s2 { width: 204px; }
.hl { width: 23px; height: 23px; flex: none; display: flex; align-items: center; justify-content: center; background: #015e84; }

.work { flex: 1; min-height: 0; display: flex; }
.side { width: 37px; flex: none; background: #404040; border-right: 1px solid #262626; display: flex; flex-direction: column; }
.sitem { height: 44.500px; flex: none; display: flex; align-items: center; justify-content: center; }
.sitem.first { height: 36px; }
.sitem.active {
  margin-left: 3px;
  margin-right: -1px;
  padding-right: 3px;
  background: #333;
  border: 1px solid #1e1e1e;
  border-right: none;
  position: relative;
}
.si { width: 22px; height: 22px; display: block; }
.si.dim { width: 18px; height: 18px; }

.panel { width: 409px; flex: none; background: #333; border-right: 1px solid #222; padding: 0 18px 0 16px; }
.phead { height: 32px; display: flex; align-items: center; margin-left: -9px; font-size: 16px; line-height: 20px; color: #eee; }
.bell { width: 13px; height: 15px; margin-right: 6px; }
.maxbox { width: 12px; height: 11px; border: 1.500px solid #eee; margin-left: auto; margin-right: -6px; }
.psort { height: 32px; margin-bottom: 9px; display: flex; align-items: center; justify-content: flex-end; font-size: 16px; color: #eee; }
.sortcar { width: 10px; height: 6px; margin: 4px 0 0 7px; }
.sortarrow { width: 6px; height: 12px; margin-left: 17px; margin-right: 5px; }
.card { height: 141px; width: 374px; display: flex; border: 1px solid #6e6e6e; }
.cardicon { width: 117px; flex: none; position: relative; }
.cubelogo { position: absolute; left: 49px; top: 20px; width: 46px; height: 40px; }
.check { position: absolute; left: 96px; top: 54px; width: 13px; height: 11px; }
.cardtext { display: flex; flex-direction: column; font-size: 16px; line-height: 21px; letter-spacing: 0.08px; color: #8e8e8e; white-space: nowrap; }
.cardtext strong { height: 22px; line-height: 22px; margin-bottom: 3px; letter-spacing: 0.5px; color: #8f8f8f; }
.cardtext p { margin: 0; height: 21px; }
.cardtext time { margin-top: 30px; color: #dcdcdc; letter-spacing: 0; }

.graphics { flex: 1; min-width: 0; display: flex; flex-direction: column; background: #2d2d2d; }
.gtabs { height: 30px; flex: none; display: flex; font-size: 16px; line-height: 30px; color: #eee; }
.gtab { display: flex; align-items: center; height: 30px; white-space: nowrap; }
.gtab:first-child { width: 162px; padding-left: 5px; }
.gtab.on { width: 261px; padding-left: 6px; background: #3a9bbf; color: #fff; letter-spacing: 0.08px; }
.ti { width: 16px; height: 16px; margin-right: 4px; flex: none; }
.save { width: 10px; height: 10px; margin-left: 6px; }
.close { width: 9px; height: 9px; margin-left: 7px; }
.view { flex: 1; position: relative; overflow: hidden; border-top: 2px solid #3a9bbf; background: linear-gradient(#cfcfcf, #dfdfdf); }
.model { position: absolute; left: 214px; top: 23px; width: 220px; height: 230px; }
.triad { position: absolute; left: 94px; top: 376px; display: flex; flex-direction: column; align-items: center; width: 8px; color: #1414b4; font: 10px/10px "Liberation Sans", sans-serif; }
.cone { width: 8px; height: 12px; margin-top: 2px; flex: none; }
```
